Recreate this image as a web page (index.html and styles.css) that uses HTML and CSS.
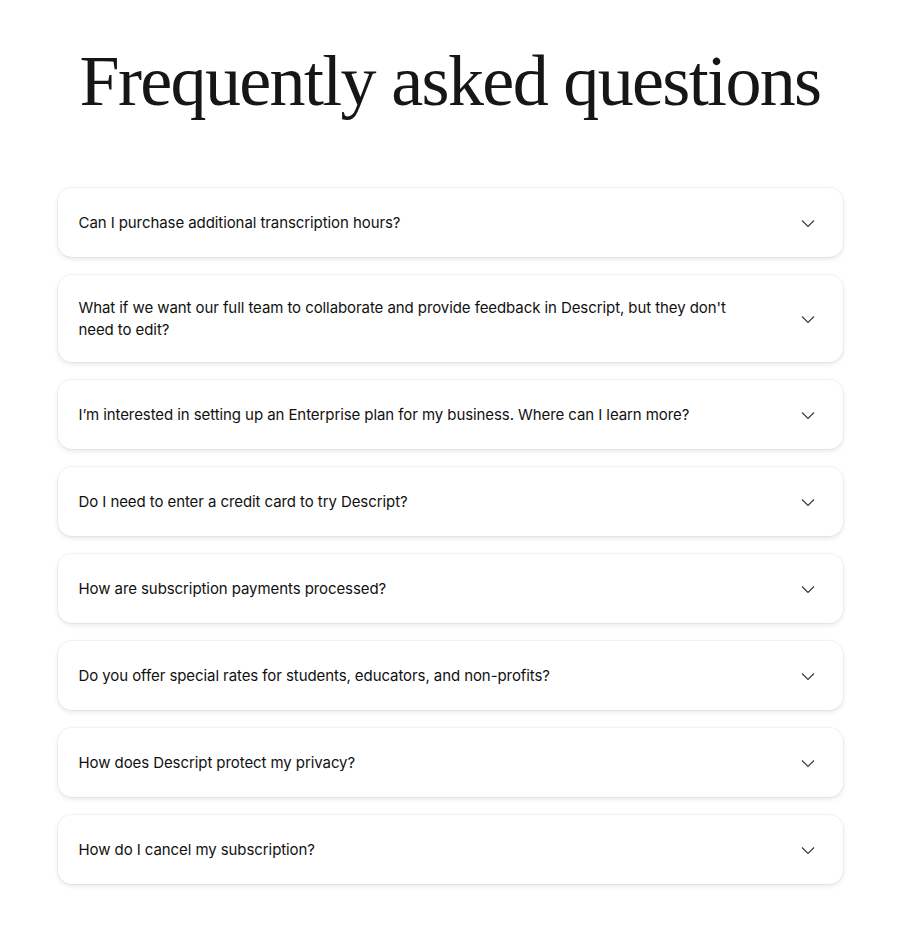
FILE: index.html
```html
<!DOCTYPE html>
<html lang="en">
<head>
<meta charset="utf-8">
<title>FAQ</title>
<link rel="stylesheet" href="styles.css">
</head>
<body>
<main class="faq">
  <h1 class="faq-title">Frequently asked questions</h1>
  <ul class="faq-list">
    <li class="faq-item"><span class="faq-q">Can I purchase additional transcription hours?</span><span class="chev"><svg viewBox="0 0 16 16" width="16" height="16"><path d="M2 5.5 L8 11.5 L14 5.5" fill="none" stroke="#3a3a3a" stroke-width="1.2"/></svg></span></li>
    <li class="faq-item"><span class="faq-q">What if we want our full team to collaborate and provide feedback in Descript, but they don't need to edit?</span><span class="chev"><svg viewBox="0 0 16 16" width="16" height="16"><path d="M2 5.5 L8 11.5 L14 5.5" fill="none" stroke="#3a3a3a" stroke-width="1.2"/></svg></span></li>
    <li class="faq-item"><span class="faq-q">I’m interested in setting up an Enterprise plan for my business. Where can I learn more?</span><span class="chev"><svg viewBox="0 0 16 16" width="16" height="16"><path d="M2 5.5 L8 11.5 L14 5.5" fill="none" stroke="#3a3a3a" stroke-width="1.2"/></svg></span></li>
    <li class="faq-item"><span class="faq-q">Do I need to enter a credit card to try Descript?</span><span class="chev"><svg viewBox="0 0 16 16" width="16" height="16"><path d="M2 5.5 L8 11.5 L14 5.5" fill="none" stroke="#3a3a3a" stroke-width="1.2"/></svg></span></li>
    <li class="faq-item"><span class="faq-q">How are subscription payments processed?</span><span class="chev"><svg viewBox="0 0 16 16" width="16" height="16"><path d="M2 5.5 L8 11.5 L14 5.5" fill="none" stroke="#3a3a3a" stroke-width="1.2"/></svg></span></li>
    <li class="faq-item"><span class="faq-q">Do you offer special rates for students, educators, and non-profits?</span><span class="chev"><svg viewBox="0 0 16 16" width="16" height="16"><path d="M2 5.5 L8 11.5 L14 5.5" fill="none" stroke="#3a3a3a" stroke-width="1.2"/></svg></span></li>
    <li class="faq-item"><span class="faq-q">How does Descript protect my privacy?</span><span class="chev"><svg viewBox="0 0 16 16" width="16" height="16"><path d="M2 5.5 L8 11.5 L14 5.5" fill="none" stroke="#3a3a3a" stroke-width="1.2"/></svg></span></li>
    <li class="faq-item"><span class="faq-q">How do I cancel my subscription?</span><span class="chev"><svg viewBox="0 0 16 16" width="16" height="16"><path d="M2 5.5 L8 11.5 L14 5.5" fill="none" stroke="#3a3a3a" stroke-width="1.2"/></svg></span></li>
  </ul>
</main>
</body>
</html>
```
FILE: styles.css
```css
* { box-sizing: border-box; }
html, body { margin: 0; padding: 0; background: #ffffff; }
body { font-family: Inter, "Noto Sans", sans-serif; color: #111111; }
.faq { width: 785px; margin: 0 auto; padding: 41px 0 56px; }
.faq-title {
  margin: 0;
  font-family: "Liberation Serif", serif;
  font-weight: 400;
  font-size: 72px;
  line-height: 80px;
  letter-spacing: -1.65px;
  text-align: center;
  color: #161616;
}
.faq-list {
  list-style: none;
  margin: 67px 0 0;
  padding: 0;
  display: flex;
  flex-direction: column;
  gap: 18px;
}
.faq-item {
  display: flex;
  align-items: center;
  gap: 40px;
  padding: 21.5px 27px 21.5px 21px;
  background: #fff;
  border-radius: 14px;
  box-shadow: 0 2px 5px rgba(0,0,0,0.10), 0 0 0 1px rgba(0,0,0,0.035);
}
.faq-q {
  flex: 1;
  font-size: 15px;
  line-height: 22px;
  letter-spacing: -0.08px;
}
.chev { display: flex; align-items: center; height: 26px; }
.chev svg { display: block; }
```
